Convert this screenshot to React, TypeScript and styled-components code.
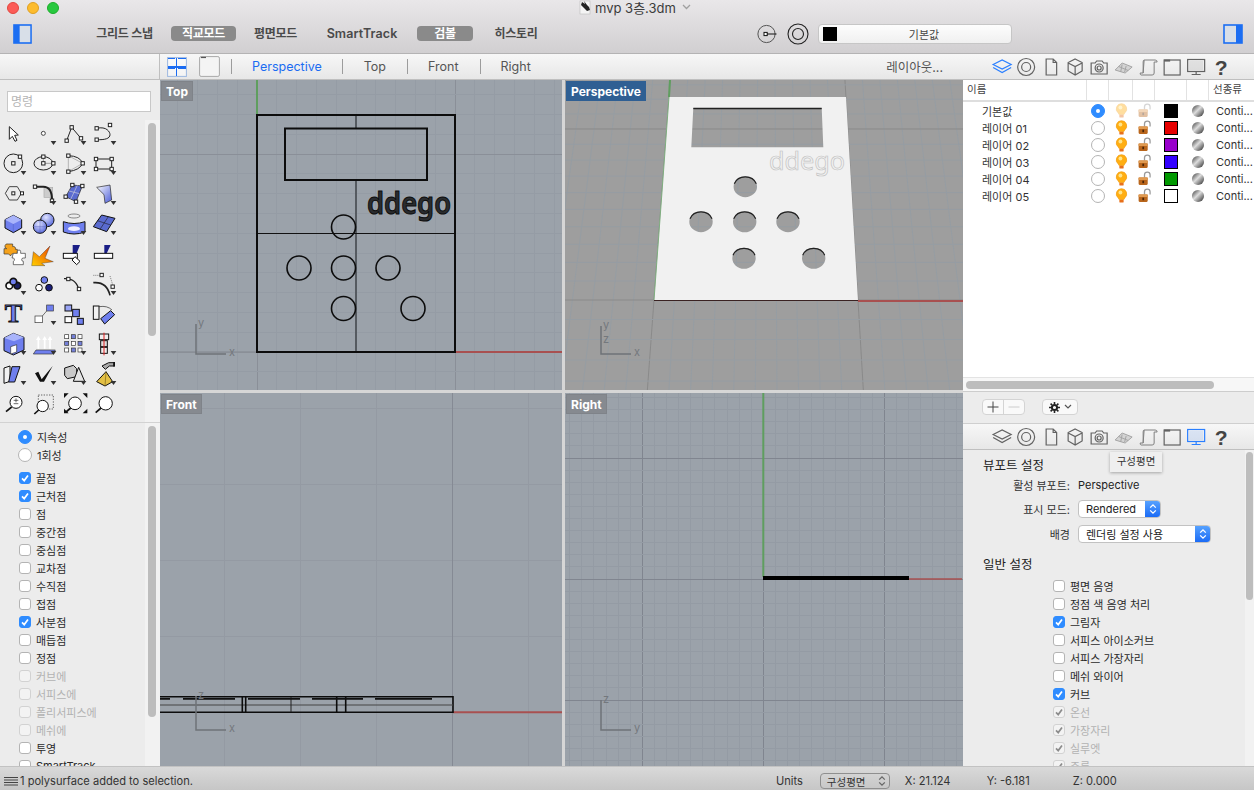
import React from "react";
import styled, { createGlobalStyle } from "styled-components";

const Global = createGlobalStyle`
  html, body { margin: 0; padding: 0; background: #ececec; }
  body { font-family: Inter, "Noto Sans CJK KR", "Noto Sans", sans-serif; font-size: 11px; color: #222; }
  * { box-sizing: border-box; }
`;

const Win = styled.div`
  width: 1254px; height: 790px; overflow: hidden; display: flex; flex-direction: column; background: #ececec;
`;
const Top = styled.header`
  height: 54px; flex: none; background: linear-gradient(#e9e7e9, #d1cfd1); border-bottom: 1px solid #b4b3b4; display: flex; flex-direction: column;
`;
const TitleRow = styled.div`
  height: 16px; display: flex; align-items: center; position: relative; padding-left: 7px; gap: 8px;
`;
const Light = styled.span<{ $c: string; $b: string }>`
  width: 12px; height: 12px; border-radius: 50%; background: ${p => p.$c}; border: 1px solid ${p => p.$b}; flex: none;
`;
const TitleBox = styled.div`
  position: absolute; left: 578px; top: -1px; height: 16px; display: flex; align-items: center; gap: 3px; font-size: 13px; color: #3c3c3c;
`;
const Chevron = styled.span`
  display: inline-flex; margin-left: 3px; color: #a0a0a0;
`;
const ToolRow = styled.div`
  height: 37px; display: flex; align-items: center; padding: 0 11px 2px 13px;
`;
const Toggle = styled.svg`
  flex: none; display: block;
`;
const Mode = styled.div<{ $w: number; $ml: number; $on?: boolean }>`
  flex: none; width: ${p => p.$w}px; margin-left: ${p => p.$ml}px; height: 15px; line-height: 15px; text-align: center; border-radius: 4px;
  font-size: 12px; letter-spacing: -0.3px; font-weight: 600;
  color: ${p => (p.$on ? "#fff" : "#4a4a4a")}; background: ${p => (p.$on ? "#8a8a8a" : "transparent")};
`;
const LatinMode = styled(Mode)`
  font-size: 12.5px; letter-spacing: 0.1px;
`;
const RoundIcon = styled.svg<{ $ml: number }>`
  flex: none; margin-left: ${p => p.$ml}px; display: block;
`;
const LayerField = styled.div`
  flex: none; margin-left: 9px; width: 194px; height: 20px; background: linear-gradient(#fdfdfd, #f0f0f0); border: 1px solid #c6c6c6; border-radius: 4px;
  display: flex; align-items: center; padding-left: 4px; font-size: 11px; color: #444;
`;
const FieldSwatch = styled.span`
  width: 14px; height: 14px; background: #000; flex: none;
`;
const FieldText = styled.span`
  flex: 1; text-align: center;
`;
const Spacer = styled.div`
  flex: 1;
`;
const Body = styled.main`
  flex: none; height: 712px; display: grid; grid-template-columns: 160px 803px 291px;
`;
const Col = styled.section`
  display: flex; flex-direction: column; min-height: 0; overflow: hidden; position: relative; background: #ececec;
`;
const Head = styled.div<{ $border?: boolean }>`
  height: 26px; flex: none; background: linear-gradient(#f7f7f7, #e7e7e7); border-bottom: 1px solid #bfbfbf;
  ${p => (p.$border ? "border-right: 1px solid #bfbfbf;" : "")}
`;
const CenterHead = styled(Head)`
  display: flex; align-items: center; padding-left: 7px; font-size: 12.5px; color: #555;
`;
const TabSep = styled.span<{ $ml: number }>`
  width: 1px; height: 15px; background: #9c9c9c; margin-left: ${p => p.$ml}px; flex: none;
`;
const Tab = styled.span<{ $ml: number; $on?: boolean }>`
  margin-left: ${p => p.$ml}px; flex: none; color: ${p => (p.$on ? "#1b6cf2" : "#555")};
`;
const LayoutBtn = styled.svg<{ $ml?: number }>`
  flex: none; display: block; margin-left: ${p => p.$ml ?? 0}px;
`;
const LayoutText = styled.span`
  margin-left: auto; margin-right: 20px; font-size: 12.5px; color: #555;
`;
const CommandBox = styled.div`
  height: 40px; flex: none; padding: 11px 9px 8px 7px;
`;
const CommandInput = styled.div`
  height: 21px; background: #fff; border: 1px solid #c8c8c8; color: #b5b5b5; font-size: 12px; line-height: 19px; padding-left: 3px;
`;
const ToolPanel = styled.div`
  height: 303px; flex: none; position: relative; border-bottom: 1px solid #d2d2d2;
`;
const ToolGrid = styled.div`
  display: grid; grid-template-columns: repeat(4, 30px); grid-auto-rows: 30px; margin-top: -2px;
`;
const ToolSvg = styled.svg`
  width: 30px; height: 30px; display: block;
`;
const ScrollTrack = styled.div<{ $top: number; $h: number }>`
  position: absolute; right: 0; top: 0; bottom: 0; width: 15px; background: #f2f2f2;
  &::after { content: ""; position: absolute; left: 3px; top: ${p => p.$top}px; width: 8px; height: ${p => p.$h}px; border-radius: 4px; background: #bdbdbd; }
`;
const SnapPanel = styled.div`
  flex: 1; min-height: 0; position: relative; padding: 5px 0 0 18px; overflow: hidden;
`;
const CheckRow = styled.div<{ $dim?: boolean }>`
  height: 18px; display: flex; align-items: center; gap: 5px; font-size: 11px; color: ${p => (p.$dim ? "#b2b2b2" : "#2a2a2a")}; white-space: nowrap;
`;
const RadioDot = styled.span<{ $on?: boolean }>`
  width: 14px; height: 14px; border-radius: 50%; flex: none; display: inline-flex; align-items: center; justify-content: center;
  background: ${p => (p.$on ? "#2f8cff" : "#fff")}; border: 1px solid ${p => (p.$on ? "#2f8cff" : "#b4b4b4")};
  &::after { content: ""; width: 4px; height: 4px; border-radius: 50%; background: ${p => (p.$on ? "#fff" : "transparent")}; }
`;
const RadioGap = styled.div`
  height: 5px;
`;
const CheckBox = styled.span<{ $on?: boolean; $dim?: boolean }>`
  width: 12px; height: 12px; margin: 0 0 0 1px; border-radius: 3px; flex: none; display: inline-flex; align-items: center; justify-content: center;
  background: ${p => (p.$on ? "#2f8cff" : p.$dim ? "#f3f3f3" : "#fff")};
  border: 1px solid ${p => (p.$on ? "#2f8cff" : p.$dim ? "#d2d2d2" : "#b4b4b4")};
`;
const Views = styled.div`
  flex: 1; display: grid; grid-template-columns: 402px 398px; grid-template-rows: 310px 373px; gap: 3px; background: #d6d6d6; min-height: 0;
`;
const View = styled.div<{ $bg: string }>`
  position: relative; background: ${p => p.$bg}; overflow: hidden;
`;
const ViewSvg = styled.svg`
  display: block; width: 100%; height: 100%;
`;
const ViewLabel = styled.div<{ $on?: boolean }>`
  position: absolute; left: 1px; top: 1px; height: 20px; line-height: 19px; padding: 0 4px; font-size: 12px; font-weight: 700; color: #fff;
  background: ${p => (p.$on ? "#2f5f93" : "#868a90")}; border: 1px solid ${p => (p.$on ? "#2f5f93" : "#7f8389")};
`;
const IconTabs = styled(Head)`
  display: flex; align-items: center; padding-left: 27px;
`;
const InspIcon = styled.svg<{ $on?: boolean }>`
  width: 24.3px; height: 22px; display: block; flex: none; color: ${p => (p.$on ? "#2a7fff" : "#626262")};
`;
const Table = styled.div`
  height: 297px; flex: none; background: #fff;
`;
const TableRow = styled.div<{ $head?: boolean }>`
  display: grid; grid-template-columns: 124px 22px 24px 22px 32px 22px 1fr; align-items: center;
  height: ${p => (p.$head ? 22 : 17)}px; font-size: 11px; color: #333;
  ${p => (p.$head ? "border-bottom: 2px solid #dedede; font-size: 10.5px; color: #444;" : "")}
`;
const HeadCell = styled.div<{ $pl?: number }>`
  height: 100%; line-height: 20px; border-right: 1px solid #e2e2e2; padding-left: ${p => p.$pl ?? 0}px;
  &:last-child { border-right: 0; }
`;
const NameCell = styled.div`
  padding-left: 19px;
`;
const CenterCell = styled.div`
  display: flex; justify-content: center; align-items: center;
`;
const LineCell = styled.div`
  padding-left: 7px; font-size: 11px;
`;
const Swatch = styled.span<{ $c: string }>`
  width: 14px; height: 14px; background: ${p => p.$c}; border: 1px solid #000; display: block;
`;
const HScroll = styled.div`
  height: 15px; flex: none; background: #f7f7f7; border-top: 1px solid #e3e3e3; border-bottom: 1px solid #cdcdcd; padding: 3px 0 0 3px;
`;
const HThumb = styled.div`
  width: 248px; height: 8px; border-radius: 4px; background: #bdbdbd;
`;
const ButtonRow = styled.div`
  height: 32px; flex: none; padding: 7px 0 0 19px; display: flex; gap: 17px; border-bottom: 1px solid #cfcfcf;
`;
const Segment = styled.div`
  width: 43px; height: 16px; display: flex; border: 1px solid #d4d4d4; border-radius: 4px; background: #f9f9f9; overflow: hidden;
`;
const SegBtn = styled.span<{ $off?: boolean }>`
  flex: 1; display: flex; align-items: center; justify-content: center; color: ${p => (p.$off ? "#ccc" : "#444")};
  & + & { border-left: 1px solid #d4d4d4; }
`;
const GearBtn = styled.div`
  width: 36px; height: 16px; border: 1px solid #d4d4d4; border-radius: 4px; background: #f9f9f9; display: flex; align-items: center; justify-content: center; gap: 4px; color: #333;
`;
const Settings = styled.div`
  flex: 1; min-height: 0; position: relative; padding: 7px 0 0 20px; overflow: hidden;
`;
const SectionTitle = styled.div<{ $mt?: number }>`
  height: 18px; line-height: 18px; font-size: 12.5px; color: #222; margin-top: ${p => p.$mt ?? 0}px;
`;
const Field = styled.div<{ $mt?: number }>`
  display: grid; grid-template-columns: 87px auto; column-gap: 8px; align-items: center; justify-content: start; height: 18px; margin-top: ${p => p.$mt ?? 0}px; font-size: 11px;
`;
const FieldLabel = styled.div`
  text-align: right; color: #333;
`;
const Select = styled.div<{ $w: number }>`
  width: ${p => p.$w}px; height: 18px; background: #fff; border: 1px solid #c2c2c2; border-radius: 4px; display: flex; align-items: center; padding-left: 7px; position: relative; overflow: hidden; font-size: 11px; color: #222;
`;
const Stepper = styled.span`
  position: absolute; right: 0; top: -1px; bottom: -1px; width: 15px; background: linear-gradient(#5aa5ff, #1768f5); display: flex; align-items: center; justify-content: center;
`;
const CheckList = styled.div`
  margin-top: 3px; padding-left: 69px;
`;
const Tooltip = styled.div`
  position: absolute; left: 147px; top: 2px; width: 52px; height: 20px; line-height: 19px; text-align: center; background: #efefef; box-shadow: 0 1px 3px rgba(0,0,0,.3); font-size: 10.5px; color: #333; z-index: 3;
`;
const SettingsTrack = styled(ScrollTrack)`
  width: 9px;
  &::after { left: 1px; width: 7px; }
`;
const Status = styled.footer`
  height: 24px; flex: none; background: linear-gradient(#d9d9d9, #c6c6c6); border-top: 1px solid #c2c2c2; display: flex; align-items: center; padding: 5px 0 0 4px; font-size: 11.1px; color: #333; position: relative; z-index: 2;
`;
const StatusText = styled.span<{ $w?: number; $ml?: number }>`
  flex: none; margin-left: ${p => p.$ml ?? 0}px; ${p => (p.$w ? `width: ${p.$w}px;` : "")}
`;
const StatusSelect = styled.div`
  flex: none; width: 70px; height: 16px; margin-left: 17px; border: 1px solid #8f8f8f; border-radius: 4px; display: flex; align-items: center; justify-content: space-between; padding: 0 3px 0 6px; font-size: 10.5px; color: #333;
`;

const Sq = ({ x, y, s = 10 }: { x: number; y: number; s?: number }) => (
  <rect x={x - s / 2} y={y - s / 2} width={s} height={s} fill="#fff" stroke="#222" strokeWidth={3} />
);
const Tri = () => <polygon points="62,69 79,69 70.5,81" fill="#333" />;
const BL = "#6f7fee";
const S = { fill: "none", stroke: "#222", strokeWidth: 3 } as const;
const SB = { stroke: "#111", strokeWidth: 3 } as const;

const tools: React.ReactNode[] = [
  <polygon points="28,26 28,64 37,55 45,70 51,67 44,52 55,51" fill="#fff" stroke="#222" strokeWidth={3} />,
  <><circle cx={40} cy={46} r={6} fill="#fff" stroke="#444" strokeWidth={3} /><Tri /></>,
  <><polyline points="20,68 35,28 63,61" {...S} /><Sq x={20} y={68} /><Sq x={35} y={28} /><Sq x={63} y={61} /><Tri /></>,
  <><path d="M20 31 C50 24 60 42 60 50 C60 62 44 66 20 65" {...S} /><Sq x={20} y={31} /><Sq x={60} y={21} /><Sq x={20} y={65} /><Tri /></>,

  <><circle cx={40} cy={46} r={28} {...S} /><Sq x={40} y={46} /><Sq x={60} y={26} /><Tri /></>,
  <><ellipse cx={40} cy={46} rx={28} ry={20} {...S} /><path d="M40 26V46H70" stroke="#777" strokeWidth={2} fill="none" /><Sq x={40} y={26} /><Sq x={40} y={46} /><Sq x={70} y={46} /><Tri /></>,
  <><polygon points="25,23 25,71 68,46" fill="none" stroke="#999" strokeWidth={2} /><path d="M25 23 Q60 24 68 46 Q60 66 25 71" {...S} /><Sq x={25} y={23} /><Sq x={25} y={71} /><Sq x={68} y={46} /><Tri /></>,
  <><rect x={18} y={33} width={47} height={30} {...S} /><Sq x={18} y={33} /><Sq x={65} y={33} /><Sq x={18} y={63} /><Sq x={65} y={63} /><Tri /></>,

  <><polygon points="16,46 28,26 52,26 64,46 52,66 28,66" fill="none" stroke="#444" strokeWidth={3} /><Sq x={40} y={46} s={9} /><Sq x={66} y={46} s={9} /><Tri /></>,
  <><rect x={42} y={28} width={26} height={30} fill="#ccc" stroke="#aaa" strokeWidth={2} /><path d="M15 26H40Q66 26 66 66" fill="none" stroke="#222" strokeWidth={6} /><Sq x={15} y={26} /><Sq x={66} y={68} /><Tri /></>,
  <><polygon points="37,21 67,24 48,71 17,56" fill="#5a6bd0" stroke="#222" strokeWidth={2} /><path d="M52 22 32 64M27 39 58 47" stroke="#ccd" strokeWidth={2} /><Sq x={37} y={21} /><Sq x={67} y={24} /><Sq x={48} y={71} /><Sq x={17} y={56} /><Tri /></>,
  <><polygon points="20,28 60,21 65,66 45,76 42,50" fill={`url(#blueG)`} stroke="#222" strokeWidth={2} /><Tri /></>,

  <><polygon points="15,35 40,22 65,35 65,60 40,74 15,60" fill={BL} {...SB} /><polygon points="15,35 40,22 65,35 40,48" fill="#a9b4fb" /><path d="M40 48V74" stroke="#4050b0" strokeWidth={1} /><Tri /></>,
  <><circle cx={52} cy={36} r={20} fill={`url(#sphereG)`} {...SB} /><circle cx={30} cy={56} r={20} fill={`url(#sphereG)`} {...SB} /><path d="M10 56H50M30 36V76" stroke="#3a47a0" strokeWidth={1} /><Tri /></>,
  <><ellipse cx={42} cy={24} rx={18} ry={6} fill="none" stroke="#555" strokeWidth={2} /><path d="M10 41Q42 52 75 41V72Q42 84 10 72Z" fill={BL} {...SB} /><ellipse cx={42} cy={62} rx={18} ry={7} fill="#eef" /><Tri /></>,
  <><polygon points="35,21 75,31 50,71 10,56" fill="#5a6bd0" {...SB} /><path d="M55 26 30 64M22 38 62 51" stroke="#223" strokeWidth={2} /><Tri /></>,

  <><path d="M24 18h14v8a6 6 0 0 1 8 8h6v14h-12a6 6 0 0 0-8 6l-6-6h-14V32h8a7 7 0 0 1 4-14z" fill="#f5a21b" stroke="#333" strokeWidth={2} /><path d="M40 46h12v-5a5 5 0 0 1 10 0v5h14v14h-6a5 5 0 0 0 0 10v10H40V70a5 5 0 0 0-4-10z" fill="#fff" stroke="#333" strokeWidth={2} /></>,
  <polygon points="5,83 10,41 28,56 60,24 45,61 70,71 35,76 45,83" fill="url(#fireG)" stroke="#222" strokeWidth={1} />,
  <><polygon points="38,21 60,21 45,58 38,56" fill="#1a1e86" /><rect x={10} y={46} width={42} height={15} fill="#fff" {...SB} /><polygon points="45,56 60,70 50,80 36,66" fill="#fff" {...SB} /></>,
  <><polygon points="43,21 62,21 48,50 43,50" fill="#1a1e86" /><rect x={13} y={46} width={55} height={15} fill="#fff" {...SB} /></>,

  <><circle cx={28} cy={53} r={10} fill="#fff" stroke="#111" strokeWidth={5} /><circle cx={52} cy={53} r={10} fill="#1a1e60" stroke="#111" strokeWidth={5} /><circle cx={40} cy={41} r={10} fill={BL} stroke="#111" strokeWidth={5} /><Tri /></>,
  <><circle cx={43} cy={36} r={10} fill={BL} {...SB} /><circle cx={27} cy={59} r={10} fill="#fff" {...SB} /><circle cx={57} cy={59} r={10} fill="#1b1f7a" {...SB} /></>,
  <><path d="M12 32Q50 30 57 68" fill="none" stroke="#222" strokeWidth={4} /><Sq x={25} y={33} /><Sq x={57} y={63} /></>,
  <><path d="M10 44Q50 40 60 82" fill="none" stroke="#222" strokeWidth={5} /><path d="M10 22H32M60 24 68 50" stroke="#444" strokeWidth={2} strokeDasharray="3 3" fill="none" /><Sq x={35} y={21} /><Sq x={68} y={56} /><Tri /></>,

  <text x={40} y={72} textAnchor="middle" fontFamily='"Liberation Serif", serif' fontWeight={700} fontSize={78} fill={BL} stroke="#111" strokeWidth={3}>T</text>,
  <><rect x={15} y={54} width={22} height={20} fill="#fff" stroke="#333" strokeWidth={2} /><rect x={50} y={21} width={20} height={18} fill={BL} stroke="#333" strokeWidth={2} /><path d="M37 54 50 39" stroke="#333" strokeWidth={2} /><Tri /></>,
  <><rect x={15} y={21} width={20} height={18} fill="#99a4f5" {...SB} /><rect x={38} y={34} width={20} height={22} fill={BL} {...SB} /><rect x={15} y={56} width={20} height={18} fill="#fff" {...SB} /><rect x={52} y={61} width={18} height={18} fill={BL} {...SB} /></>,
  <><rect x={10} y={24} width={17} height={40} fill="#f2f2f2" {...SB} /><polygon points="32,62 62,38 74,50 44,78" fill={BL} {...SB} /><path d="M27 26Q52 22 66 36" fill="none" stroke="#222" strokeWidth={2} /></>,

  <><polygon points="12,30 40,16 72,28 72,66 40,81 12,68" fill={BL} {...SB} /><polygon points="12,30 40,16 72,28 42,40" fill="#a9b4fb" /><polygon points="32,56 50,50 50,72 32,78" fill="#fff" stroke="#333" strokeWidth={2} /><Tri /></>,
  <><polygon points="18,66 76,66 68,78 10,78" fill={BL} stroke="#333" strokeWidth={2} /><path d="M25 62V32M44 62V32M60 62V32" stroke="#fff" strokeWidth={5} /><path d="M18 36 25 24 32 36ZM37 36 44 24 51 36ZM53 36 60 24 67 36Z" fill="#fff" /><Tri /></>,
  <>
    {[20, 40, 60].flatMap(x => [26, 46, 66].map(y => (
      <rect key={`${x}-${y}`} x={x - 6} y={y - 6} width={12} height={12} fill={(x + y) % 40 === 6 ? "#fff" : "#7480d8"} stroke="#333" strokeWidth={2} />
    )))}
    <Tri />
  </>,
  <><rect x={28} y={18} width={28} height={17} fill="#eee" {...SB} /><rect x={32} y={38} width={20} height={18} fill="#ddd" {...SB} /><rect x={32} y={58} width={20} height={18} fill="#eee" {...SB} /><path d="M42 14V82" stroke="#e02020" strokeWidth={3} /><Tri /></>,

  <><polygon points="12,30 30,24 30,70 12,76" fill="#f2f2f2" {...SB} /><polygon points="36,26 60,26 44,72 26,72" fill={BL} {...SB} /><Tri /></>,
  <><polygon points="15,46 25,41 35,64 68,24 42,71 30,71" fill="#111" /><Tri /></>,
  <><polygon points="14,30 40,22 50,32 50,56 22,62 14,52" fill="#c9c9c9" {...SB} /><polygon points="56,28 74,70 40,70" fill="#e5e5e5" {...SB} /><Tri /></>,
  <><polygon points="20,71 48,41 68,71 45,84" fill="#e3c045" {...SB} /><path d="M48 41 45 84" stroke="#7a6418" strokeWidth={2} /><path d="M36 24 56 14H72V24H58L46 34Z" fill="#aaa" {...SB} /><rect x={70} y={12} width={5} height={14} fill="#111" /><Tri /></>,

  <><circle cx={48} cy={43} r={18} fill="#fff" {...SB} /><path d="M35 57 18 71" stroke="#111" strokeWidth={5} /><path d="M41 37H55M48 31V43M41 47H55" stroke="#222" strokeWidth={2} /></>,
  <><rect x={25} y={21} width={45} height={42} fill="none" stroke="#222" strokeWidth={2} strokeDasharray="4 4" /><circle cx={38} cy={54} r={17} fill="#fff" {...SB} /><path d="M26 66 13 78" stroke="#111" strokeWidth={5} /></>,
  <><path d="M12 30V16H26L12 30ZM68 16H82V30ZM82 62V76H68ZM12 62 26 76H12Z" fill="#111" /><circle cx={45} cy={46} r={19} fill="#fff" {...SB} /><path d="M32 60 18 72" stroke="#111" strokeWidth={5} /></>,
  <><circle cx={47} cy={46} r={20} fill="#fff" {...SB} /><path d="M33 60 17 74" stroke="#111" strokeWidth={5} /></>,
];

const CheckMark = ({ c = "#fff" }: { c?: string }) => (
  <svg width="10" height="10" viewBox="0 0 10 10"><path d="M2 5.4 4.2 7.6 8 2.6" fill="none" stroke={c} strokeWidth="1.7" /></svg>
);

const Check = ({ label, on, dim }: { label: string; on?: boolean; dim?: boolean }) => (
  <CheckRow $dim={dim}>
    <CheckBox $on={on && !dim} $dim={dim}>{on ? <CheckMark c={dim ? "#8c8c8c" : "#fff"} /> : null}</CheckBox>
    {label}
  </CheckRow>
);

const range = (a: number, b: number, s: number) => {
  const out: number[] = [];
  for (let v = a; v <= b + 0.001; v += s) out.push(v);
  return out;
};

type GridP = { x: number; y: number; w: number; h: number; ox: number; oy: number; step: number; every: number; minor: string; major: string };
const OrthoGrid = ({ x, y, w, h, ox, oy, step, every, minor, major }: GridP) => {
  const xn = Math.ceil((x - ox) / step), xm = Math.floor((x + w - ox) / step);
  const yn = Math.ceil((y - oy) / step), ym = Math.floor((y + h - oy) / step);
  return (
    <g shapeRendering="crispEdges" strokeWidth={1}>
      {range(xn, xm, 1).map(i => {
        const px = ox + i * step;
        return <line key={`x${i}`} x1={px} x2={px} y1={y} y2={y + h} stroke={Math.round(i) % every === 0 ? major : minor} />;
      })}
      {range(yn, ym, 1).map(i => {
        const py = oy + i * step;
        return <line key={`y${i}`} y1={py} y2={py} x1={x} x2={x + w} stroke={Math.round(i) % every === 0 ? major : minor} />;
      })}
    </g>
  );
};

const AxisIcon = ({ ox, oy, w, h, a, b, mid }: { ox: number; oy: number; w: number; h: number; a: string; b: string; mid?: string }) => (
  <g>
    <path d={`M${ox} ${oy - h}V${oy}H${ox + w}`} fill="none" stroke="#6f7378" strokeWidth={1.5} />
    <text x={ox + 2} y={oy - h + 3} fontSize={11} fill="#74787d" fontFamily="Inter, sans-serif">{a}</text>
    {mid ? <text x={ox + 2} y={oy - 11} fontSize={11} fill="#74787d" fontFamily="Inter, sans-serif">{mid}</text> : null}
    <text x={ox + w + 3} y={oy + 2} fontSize={11} fill="#74787d" fontFamily="Inter, sans-serif">{b}</text>
  </g>
);

const TopView = () => (
  <ViewSvg viewBox="160 80 402 310">
    <OrthoGrid x={160} y={80} w={402} h={310} ox={257} oy={352} step={19.8} every={10} minor="#959ca5" major="#8a8f98" />
    <path d="M257 80V115" stroke="#5f9e5f" strokeWidth={2} />
    <path d="M160 352H257" stroke="#8a8f97" strokeWidth={1.5} />
    <path d="M455 352H562" stroke="#a85050" strokeWidth={2} />
    <path d="M356 115V128M356 180V352" stroke="#555a60" strokeWidth={2} />
    <path d="M257 233.5H455" stroke="#111" strokeWidth={1} />
    <rect x={257} y={115} width={198} height={237} fill="none" stroke="#0c0c0c" strokeWidth={2} />
    <rect x={285} y={128.5} width={142} height={51.5} fill="none" stroke="#0c0c0c" strokeWidth={2} />
    {[[343.5, 227], [299, 268], [343.5, 268], [388, 268], [343.5, 308.5], [413, 308.5]].map(([cx, cy]) => (
      <circle key={`${cx}-${cy}`} cx={cx} cy={cy} r={12} fill="none" stroke="#0c0c0c" strokeWidth={1.6} />
    ))}
    <text x={367} y={214} fontFamily='"Noto Sans", sans-serif' fontWeight={600} fontSize={30} textLength={84} lengthAdjust="spacingAndGlyphs" fill="#2a2c2f" stroke="#0c0c0c" strokeWidth={1}>ddego</text>
    <AxisIcon ox={196} oy={354} w={30} h={30} a="y" b="x" />
  </ViewSvg>
);

const VX = 767, VY = -1234, REF = 300 - VY;
const perspX = (X: number, y: number) => VX + (X * (y - VY)) / REF;
const perspY = (k: number) => VY + 1 / (1 / REF + k * 8.18e-6);

const PerspView = () => {
  const holes: [number, number][] = [[745.3, 186.7], [701, 221.7], [744.7, 221.7], [788, 221.7], [744, 258.3], [813.7, 258.3]];
  const ell = ([cx, cy]: [number, number]) => `M${cx - 11.7} ${cy}a11.7 10.5 0 1 0 23.4 0a11.7 10.5 0 1 0 -23.4 0Z`;
  return (
    <ViewSvg viewBox="565 80 398 310">
      <g strokeWidth={1}>
        {range(-60, 60, 1).map(i => {
          const X = -113 + 20.4 * i;
          return <line key={i} x1={perspX(X, 80)} y1={80} x2={perspX(X, 390)} y2={390} stroke={i % 10 === 0 ? "#8a8a8a" : "#969da3"} />;
        })}
        {range(-16, 16, 1).map(k => {
          const y = perspY(k);
          return <line key={k} x1={565} x2={963} y1={y} y2={y} stroke={k % 10 === 0 ? "#8a8a8a" : "#969da3"} />;
        })}
      </g>
      <path d="M669 97 670 80" stroke="#5f9e5f" strokeWidth={2} />
      <path d="M858 301H963" stroke="#a85050" strokeWidth={2} />
      <path d={`M669 97H846L858 301H654Z M693.3 108H821.7L823.3 147.3H691.3Z ${holes.map(ell).join(" ")}`} fill="#f1f1f1" fillRule="evenodd" />
      <path d="M654 300 669 97" stroke="#7fae7f" strokeWidth={1} fill="none" />
      <path d="M654 300.5H858" stroke="#3a2222" strokeWidth={1.2} />
      <path d="M693.3 108.5H821.7" stroke="#222" strokeWidth={1.4} />
      {holes.map(([cx, cy]) => (
        <path key={cx + cy} d={`M${cx - 11} ${cy - 3}A11.7 10.5 0 0 1 ${cx + 11} ${cy - 3}`} fill="none" stroke="#222" strokeWidth={1.2} />
      ))}
      <text x={769} y={170} fontFamily='"Noto Sans", sans-serif' fontSize={26} textLength={76} lengthAdjust="spacingAndGlyphs" fill="none" stroke="#c2c2c2" strokeWidth={0.7}>ddego</text>
      <AxisIcon ox={601} oy={354} w={30} h={28} a="y" b="x" mid="z" />
    </ViewSvg>
  );
};

const FrontView = () => (
  <ViewSvg viewBox="160 393 402 373">
    <g shapeRendering="crispEdges" strokeWidth={1} stroke="#949aa3">
      {[224, 300, 376, 528].map(x => <line key={x} x1={x} x2={x} y1={393} y2={766} />)}
      {[408, 484, 560, 636].map(y => <line key={y} y1={y} y2={y} x1={160} x2={562} />)}
      <line x1={452.5} x2={452.5} y1={393} y2={766} stroke="#858a94" />
    </g>
    <path d="M453 712.3H562" stroke="#a85050" strokeWidth={2} />
    <path d="M160 696.7H453V712.3H160" fill="none" stroke="#0c0c0c" strokeWidth={1.6} />
    <path d="M160 705H453" stroke="#444" strokeWidth={1} />
    <path d="M242.3 697V712M245.7 697V712M336.7 697V712M345.7 697V712" stroke="#0c0c0c" strokeWidth={1.6} />
    <path d="M291 697V712" stroke="#222" strokeWidth={1} />
    <path d="M160 698.8H170M183 698.8H235M248 698.8H300M312 698.8H363M375 698.8H432" stroke="#111" strokeWidth={1.8} />
    <AxisIcon ox={196} oy={730} w={30} h={34} a="z" b="x" />
  </ViewSvg>
);

const RightView = () => (
  <ViewSvg viewBox="565 393 398 373">
    <OrthoGrid x={565} y={393} w={398} h={373} ox={763.3} oy={579} step={12.1} every={10} minor="#949ba4" major="#80858f" />
    <path d="M763.3 393V577" stroke="#5f9e5f" strokeWidth={2} />
    <path d="M909 579H962" stroke="#a85050" strokeWidth={1.6} />
    <path d="M763 578H909" stroke="#000" strokeWidth={4} />
    <AxisIcon ox={601} oy={730} w={30} h={30} a="z" b="y" />
  </ViewSvg>
);

const InspectorIcons = ({ active }: { active: number }) => {
  const icons: React.ReactNode[] = [
    <g fill="none" stroke="currentColor" strokeWidth="1.2"><path d="M2 8.5 11 4 20 8.5 11 13Z" /><path d="M2 11.5 11 16.5 20 11.5" /></g>,
    <g fill="none" stroke="currentColor" strokeWidth="1.2"><circle cx="11" cy="11" r="8.5" /><circle cx="11" cy="11" r="4.5" /></g>,
    <path d="M6 3H13L16.5 6.5V19H6ZM13 3V6.5H16.5" fill="none" stroke="currentColor" strokeWidth="1.2" />,
    <path d="M11 3 18 6.5V15L11 19 4 15V6.5ZM4 7 11 10.5 18 7M11 10.5V19" fill="none" stroke="currentColor" strokeWidth="1.2" />,
    <g fill="none" stroke="currentColor" strokeWidth="1.2"><path d="M3 7H7L8.5 5H14L15.5 7H19V18H3Z" /><circle cx="11" cy="12" r="4" /><circle cx="11" cy="12" r="2" /></g>,
    <path d="M3 14 10 7 20 11 13 17ZM6.5 10.5 16 14.5M10 8.5 8.5 16M14 10 12.5 16" fill="#d4d4d4" stroke="#a5a5a5" strokeWidth="1" />,
    <path d="M7 4H18Q20 4 20 6H17V17Q17 19 15 19H4Q3 19 3 17H6ZM7 4Q6 4 6 6V17" fill="none" stroke="#808080" strokeWidth="1" />,
    <g fill="none" stroke="currentColor" strokeWidth="1.2"><rect x="3" y="4" width="16" height="15" /><path d="M3 4.6H9" strokeWidth="2" /></g>,
    <g fill="none" stroke="currentColor" strokeWidth="1.2"><rect x="2.5" y="3.5" width="17" height="12" /><rect x="4" y="5" width="14" height="9" fill="currentColor" fillOpacity=".12" stroke="none" /><path d="M11 15.5V18M6.5 18.5H15.5" /></g>,
    <text x="11" y="19" textAnchor="middle" fontFamily='"Liberation Sans", sans-serif' fontWeight={700} fontSize="21" fill="#444">?</text>,
  ];
  return (
    <>
      {icons.map((ic, i) => (
        <InspIcon key={i} viewBox="-1 0 24 22" $on={i === active}>{ic}</InspIcon>
      ))}
    </>
  );
};

const Bulb = ({ dim }: { dim?: boolean }) => (
  <svg width="15" height="15" viewBox="0 0 14 14" opacity={dim ? 0.4 : 1}>
    <path d="M7 .6a4.9 4.9 0 0 1 3.2 8.6L9 11H5L3.8 9.2A4.9 4.9 0 0 1 7 .6Z" fill="#ffae12" stroke="#f09a10" strokeWidth=".6" />
    <circle cx="6" cy="4.2" r="1.8" fill="#ffe48a" />
    <rect x="5" y="11" width="4" height="2.6" rx=".8" fill="#e8701a" />
  </svg>
);
const Lock = ({ dim }: { dim?: boolean }) => (
  <svg width="15" height="15" viewBox="0 0 14 14" opacity={dim ? 0.4 : 1}>
    <path d="M7 6V3.6a2.6 2.6 0 0 1 5.2 0V6" fill="none" stroke="#9a9a9a" strokeWidth="1.2" />
    <rect x="1.5" y="6" width="8.5" height="7" rx="1" fill="#b9661c" />
    <rect x="1.5" y="6" width="8.5" height="2.4" fill="#e09a50" />
    <rect x="5" y="9" width="1.6" height="2.4" fill="#4a2508" />
  </svg>
);
const Ball = () => (
  <svg width="14" height="14" viewBox="0 0 12 12">
    <circle cx="6" cy="6" r="5.2" fill="url(#ballG)" />
  </svg>
);
const StepChev = ({ c = "#fff" }: { c?: string }) => (
  <svg width="8" height="12" viewBox="0 0 8 12"><path d="M1.2 4.6 4 1.8 6.8 4.6M1.2 7.4 4 10.2 6.8 7.4" fill="none" stroke={c} strokeWidth="1.3" /></svg>
);

const layers = [
  { n: "기본값", c: "#000000", on: true },
  { n: "레이어 01", c: "#e60000" },
  { n: "레이어 02", c: "#9900cc" },
  { n: "레이어 03", c: "#3300ff" },
  { n: "레이어 04", c: "#009900" },
  { n: "레이어 05", c: "#ffffff" },
];

const snaps: [string, boolean?, boolean?][] = [
  ["끝점", true], ["근처점", true], ["점"], ["중간점"], ["중심점"], ["교차점"], ["수직점"], ["접점"], ["사분점", true], ["매듭점"], ["정점"],
  ["커브에", false, true], ["서피스에", false, true], ["폴리서피스에", false, true], ["메쉬에", false, true], ["투영"], ["SmartTrack"],
];
const displayOpts: [string, boolean?, boolean?][] = [
  ["평면 음영"], ["정점 색 음영 처리"], ["그림자", true], ["서피스 아이소커브"], ["서피스 가장자리"], ["메쉬 와이어"], ["커브", true],
  ["온선", true, true], ["가장자리", true, true], ["실루엣", true, true], ["주름", true, true],
];

export default function App() {
  return (
    <Win>
      <Global />
      <svg width="0" height="0" aria-hidden="true">
        <defs>
          <linearGradient id="blueG" x1="0" y1="0" x2="1" y2="1"><stop offset="0" stopColor="#fff" /><stop offset="1" stopColor="#4a5cd8" /></linearGradient>
          <radialGradient id="sphereG" cx=".4" cy=".3" r=".8"><stop offset="0" stopColor="#dfe3ff" /><stop offset="1" stopColor="#4a5cd8" /></radialGradient>
          <linearGradient id="fireG" x1="0" y1="1" x2="1" y2="0"><stop offset="0" stopColor="#ffd000" /><stop offset="1" stopColor="#e83a00" /></linearGradient>
          <linearGradient id="ballG" x1="0" y1="0" x2="1" y2="1"><stop offset="0" stopColor="#333" /><stop offset=".45" stopColor="#ddd" /><stop offset="1" stopColor="#222" /></linearGradient>
        </defs>
      </svg>
      <Top>
        <TitleRow>
          <Light $c="#fc5b57" $b="#e2463f" />
          <Light $c="#fdbc2e" $b="#dfa023" />
          <Light $c="#28c83f" $b="#1dad2b" />
          <TitleBox>
            <svg width="14" height="15" viewBox="0 0 14 15">
              <rect x="2" y="1" width="10" height="13" fill="#f4f4f4" stroke="#bbb" strokeWidth=".6" />
              <path d="M4 2 7 4 6 1 9 5 11 7 12 10 9 11 7 9 5 7 3 5Z" fill="#222" />
            </svg>
            <span>mvp 3층.3dm</span>
            <Chevron>
              <svg width="9" height="6" viewBox="0 0 9 6"><path d="M1 1 4.5 4.5 8 1" fill="none" stroke="currentColor" strokeWidth="1.3" /></svg>
            </Chevron>
          </TitleBox>
        </TitleRow>
        <ToolRow>
          <Toggle width="19" height="20" viewBox="0 0 20 20" preserveAspectRatio="none">
            <rect x="1" y="1" width="18" height="18" fill="#d8dfe8" stroke="#1c6ef2" strokeWidth="1.6" />
            <rect x="1" y="1" width="6" height="18" fill="#1c6ef2" />
          </Toggle>
          <Mode $w={65} $ml={60}>그리드 스냅</Mode>
          <Mode $w={65} $ml={14} $on>직교모드</Mode>
          <Mode $w={65} $ml={7}>평면모드</Mode>
          <LatinMode $w={80} $ml={14}>SmartTrack</LatinMode>
          <Mode $w={56} $ml={15} $on>검볼</Mode>
          <Mode $w={60} $ml={13}>히스토리</Mode>
          <RoundIcon $ml={211} width="20" height="20" viewBox="0 0 20 20">
            <circle cx="9.5" cy="10" r="8.6" fill="none" stroke="#555" strokeWidth="1" />
            <rect x="7" y="8.4" width="3.2" height="3.2" fill="#fff" stroke="#111" strokeWidth="1" />
            <path d="M10 10H19.5" stroke="#111" strokeWidth="1" />
          </RoundIcon>
          <RoundIcon $ml={10} width="22" height="22" viewBox="0 0 22 22">
            <circle cx="11" cy="11" r="10" fill="none" stroke="#222" strokeWidth="1.1" />
            <circle cx="11" cy="11" r="5.5" fill="none" stroke="#222" strokeWidth="1.1" />
          </RoundIcon>
          <LayerField>
            <FieldSwatch />
            <FieldText>기본값</FieldText>
          </LayerField>
          <Spacer />
          <Toggle width="20" height="20" viewBox="0 0 20 20">
            <rect x="1" y="1" width="18" height="18" fill="#d8dfe8" stroke="#1c6ef2" strokeWidth="1.6" />
            <rect x="13" y="1" width="6" height="18" fill="#1c6ef2" />
          </Toggle>
        </ToolRow>
      </Top>
      <Body>
        <Col>
          <Head $border />
          <CommandBox><CommandInput>명령</CommandInput></CommandBox>
          <ToolPanel>
            <ToolGrid>
              {tools.map((t, i) => <ToolSvg key={i} viewBox="0 0 90 90">{t}</ToolSvg>)}
            </ToolGrid>
            <ScrollTrack $top={3} $h={213} />
          </ToolPanel>
          <SnapPanel>
            <CheckRow><RadioDot $on />지속성</CheckRow>
            <CheckRow><RadioDot />1회성</CheckRow>
            <RadioGap />
            {snaps.map(([l, on, dim]) => <Check key={l} label={l} on={on} dim={dim} />)}
            <ScrollTrack $top={3} $h={291} />
          </SnapPanel>
        </Col>
        <Col>
          <CenterHead>
            <LayoutBtn width="20" height="20" viewBox="0 0 20 20">
              <rect x=".6" y=".6" width="18.8" height="18.8" fill="#fff" fillOpacity=".5" stroke="#9db8e0" strokeWidth="1" />
              <path d="M1 9.5H19M1 10.5H19M9.5 1V19M1 1.5H8M11 1.5H19M1 11.5H8M11 11.5H19" stroke="#1b6cf2" strokeWidth="1" fill="none" />
            </LayoutBtn>
            <LayoutBtn $ml={12} width="21" height="21" viewBox="0 0 21 21">
              <rect x=".6" y=".6" width="19.8" height="19.8" rx="1.5" fill="#f4f4f4" stroke="#a8a8a8" strokeWidth="1" />
              <path d="M2 1.5H7" stroke="#555" strokeWidth="1.2" />
            </LayoutBtn>
            <TabSep $ml={11} />
            <Tab $ml={20} $on>Perspective</Tab>
            <TabSep $ml={20} />
            <Tab $ml={21}>Top</Tab>
            <TabSep $ml={21} />
            <Tab $ml={20}>Front</Tab>
            <TabSep $ml={21} />
            <Tab $ml={20}>Right</Tab>
            <LayoutText>레이아웃...</LayoutText>
          </CenterHead>
          <Views>
            <View $bg="#9ba2aa"><TopView /><ViewLabel>Top</ViewLabel></View>
            <View $bg="#9e9e9e"><PerspView /><ViewLabel $on>Perspective</ViewLabel></View>
            <View $bg="#9ba2aa"><FrontView /><ViewLabel>Front</ViewLabel></View>
            <View $bg="#9ba2aa"><RightView /><ViewLabel>Right</ViewLabel></View>
          </Views>
        </Col>
        <Col>
          <IconTabs><InspectorIcons active={0} /></IconTabs>
          <Table>
            <TableRow $head>
              <HeadCell $pl={4}>이름</HeadCell>
              <HeadCell /><HeadCell /><HeadCell /><HeadCell /><HeadCell />
              <HeadCell $pl={4}>선종류</HeadCell>
            </TableRow>
            {layers.map(l => (
              <TableRow key={l.n}>
                <NameCell>{l.n}</NameCell>
                <CenterCell><RadioDot $on={l.on} /></CenterCell>
                <CenterCell><Bulb dim={l.on} /></CenterCell>
                <CenterCell><Lock dim={l.on} /></CenterCell>
                <CenterCell><Swatch $c={l.c} /></CenterCell>
                <CenterCell><Ball /></CenterCell>
                <LineCell>Conti...</LineCell>
              </TableRow>
            ))}
          </Table>
          <HScroll><HThumb /></HScroll>
          <ButtonRow>
            <Segment>
              <SegBtn><svg width="12" height="12" viewBox="0 0 12 12"><path d="M6 .5V11.5M.5 6H11.5" stroke="currentColor" strokeWidth="1" /></svg></SegBtn>
              <SegBtn $off><svg width="12" height="12" viewBox="0 0 12 12"><path d="M.5 6H11.5" stroke="currentColor" strokeWidth="1" /></svg></SegBtn>
            </Segment>
            <GearBtn>
              <svg width="11" height="11" viewBox="0 0 11 11">
                <circle cx="5.5" cy="5.5" r="2.6" fill="none" stroke="#222" strokeWidth="2" />
                <path d="M5.5 0V2M5.5 9V11M0 5.5H2M9 5.5H11M1.6 1.6 3 3M8 8 9.4 9.4M1.6 9.4 3 8M8 3 9.4 1.6" stroke="#222" strokeWidth="1.6" />
              </svg>
              <svg width="8" height="6" viewBox="0 0 8 6"><path d="M1 1 4 4 7 1" fill="none" stroke="#555" strokeWidth="1.2" /></svg>
            </GearBtn>
          </ButtonRow>
          <IconTabs><InspectorIcons active={8} /></IconTabs>
          <Settings>
            <Tooltip>구성평면</Tooltip>
            <SectionTitle>뷰포트 설정</SectionTitle>
            <Field $mt={1}><FieldLabel>활성 뷰포트:</FieldLabel><span>Perspective</span></Field>
            <Field $mt={6}>
              <FieldLabel>표시 모드:</FieldLabel>
              <Select $w={83}>Rendered<Stepper><StepChev /></Stepper></Select>
            </Field>
            <Field $mt={7}>
              <FieldLabel>배경</FieldLabel>
              <Select $w={133}>렌더링 설정 사용<Stepper><StepChev /></Stepper></Select>
            </Field>
            <SectionTitle $mt={13}>일반 설정</SectionTitle>
            <CheckList>
              {displayOpts.map(([l, on, dim]) => <Check key={l} label={l} on={on} dim={dim} />)}
            </CheckList>
            <SettingsTrack $top={2} $h={148} />
          </Settings>
        </Col>
      </Body>
      <Status>
        <svg width="14" height="11" viewBox="0 0 14 11"><path d="M0 1.5H14M0 4H14M0 6.5H14M0 9H14" stroke="#444" strokeWidth="1" /></svg>
        <StatusText $ml={2}>1 polysurface added to selection.</StatusText>
        <StatusText $ml={583}>Units</StatusText>
        <StatusSelect>구성평면<StepChev c="#666" /></StatusSelect>
        <StatusText $ml={15} $w={82}>X: 21.124</StatusText>
        <StatusText $w={86}>Y: -6.181</StatusText>
        <StatusText>Z: 0.000</StatusText>
      </Status>
    </Win>
  );
}
